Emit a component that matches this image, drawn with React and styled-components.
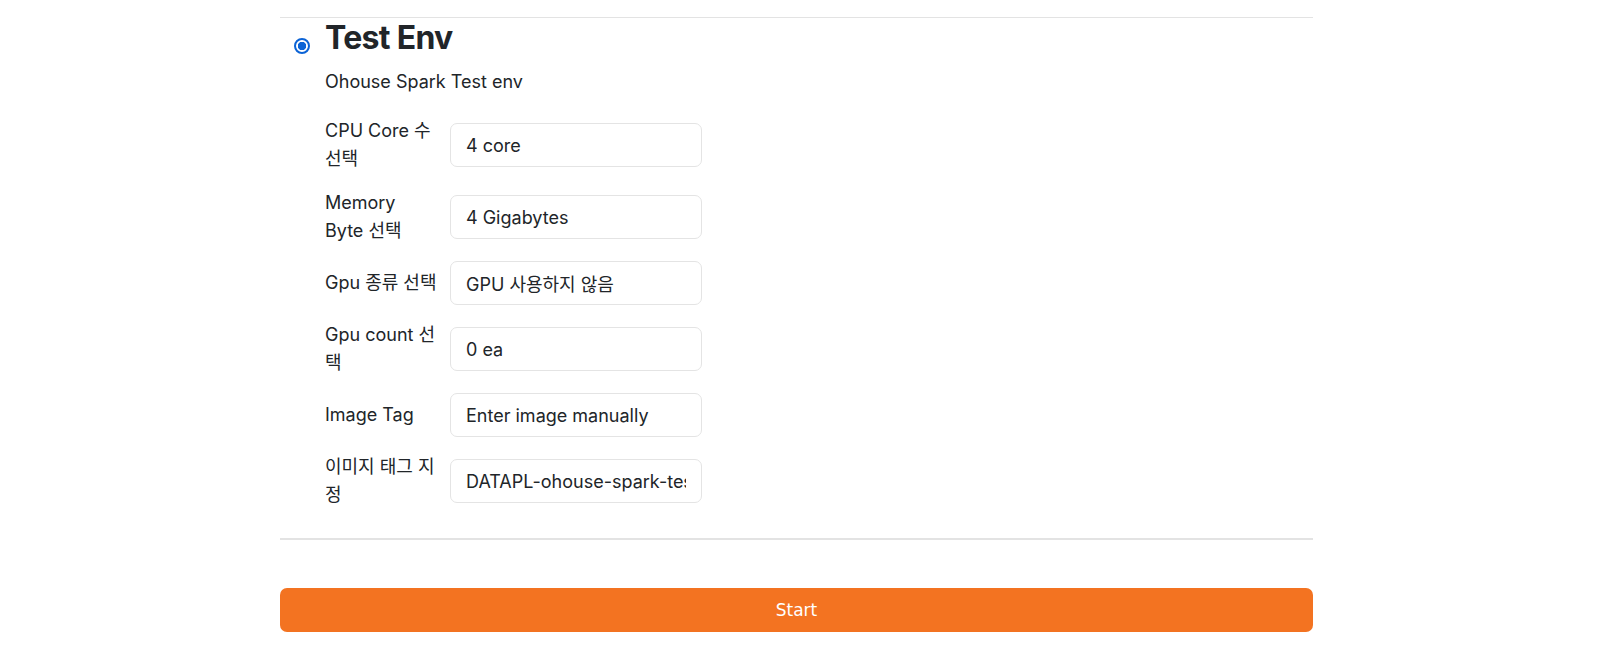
import React from 'react';
import styled, { createGlobalStyle } from 'styled-components';

const GlobalStyle = createGlobalStyle`
  body {
    margin: 0;
    padding: 0;
    background-color: #ffffff;
    color: #212529;
    font-family: Inter, "Noto Sans CJK KR", "Noto Sans", sans-serif;
  }
`;

const Page = styled.div`
  width: 1033px;
  padding: 17px 0 0 280px;
`;

const EnvSection = styled.section`
  border-top: 1px solid #e3e3e3;
  border-bottom: 2px solid #e3e3e3;
  padding-bottom: 29px;
`;

const EnvOption = styled.div`
  display: flex;
  align-items: flex-start;
`;

const RadioCol = styled.div`
  width: 45px;
  padding: 20px 0 0 14px;
  box-sizing: border-box;
`;

const Radio = styled.input`
  appearance: none;
  margin: 0;
  width: 16px;
  height: 16px;
  border-radius: 50%;
  border: 2px solid #0b63d6;
  background: radial-gradient(circle, #0b63d6 0 4px, #ffffff 4.5px);
  display: block;
`;

const Body = styled.div`
  flex: 1;
  display: flex;
  flex-direction: column;
`;

const Title = styled.h2`
  margin: 1px 0 0;
  font-size: 32px;
  line-height: 1.2;
  font-weight: 700;
  letter-spacing: -0.7px;
  color: #212529;
`;

const Description = styled.p`
  margin: 11px 0 0;
  font-size: 18px;
  line-height: 27px;
`;

const FieldList = styled.div`
  margin-top: 22px;
  display: flex;
  flex-direction: column;
  gap: 16px;
`;

const Field = styled.div`
  display: grid;
  grid-template-columns: 112px 252px;
  column-gap: 13px;
  align-items: center;
`;

const Label = styled.label`
  font-size: 18px;
  line-height: 28px;
`;

const Input = styled.input`
  box-sizing: border-box;
  width: 252px;
  height: 44px;
  padding: 0 15px;
  border: 1px solid #e4e4e4;
  border-radius: 7px;
  font-family: inherit;
  font-size: 18px;
  color: #212529;
  background: #ffffff;
  outline: none;
`;

const StartButton = styled.button`
  display: block;
  width: 100%;
  height: 44px;
  margin-top: 48px;
  border: none;
  border-radius: 7px;
  background-color: #f37321;
  color: #ffffff;
  font-family: "DejaVu Sans", Verdana, sans-serif;
  font-size: 17px;
  cursor: pointer;
`;

const fields = [
  { label: 'CPU Core 수 선택', value: '4 core' },
  { label: 'Memory Byte 선택', value: '4 Gigabytes' },
  { label: 'Gpu 종류 선택', value: 'GPU 사용하지 않음' },
  { label: 'Gpu count 선택', value: '0 ea' },
  { label: 'Image Tag', value: 'Enter image manually' },
  { label: '이미지 태그 지정', value: 'DATAPL-ohouse-spark-test' },
];

export default function App() {
  return (
    <>
      <GlobalStyle />
      <Page>
        <EnvSection>
          <EnvOption>
            <RadioCol>
              <Radio type="radio" name="env" defaultChecked />
            </RadioCol>
            <Body>
              <Title>Test Env</Title>
              <Description>Ohouse Spark Test env</Description>
              <FieldList>
                {fields.map((f) => (
                  <Field key={f.label}>
                    <Label>{f.label}</Label>
                    <Input defaultValue={f.value} readOnly />
                  </Field>
                ))}
              </FieldList>
            </Body>
          </EnvOption>
        </EnvSection>
        <StartButton>Start</StartButton>
      </Page>
    </>
  );
}
